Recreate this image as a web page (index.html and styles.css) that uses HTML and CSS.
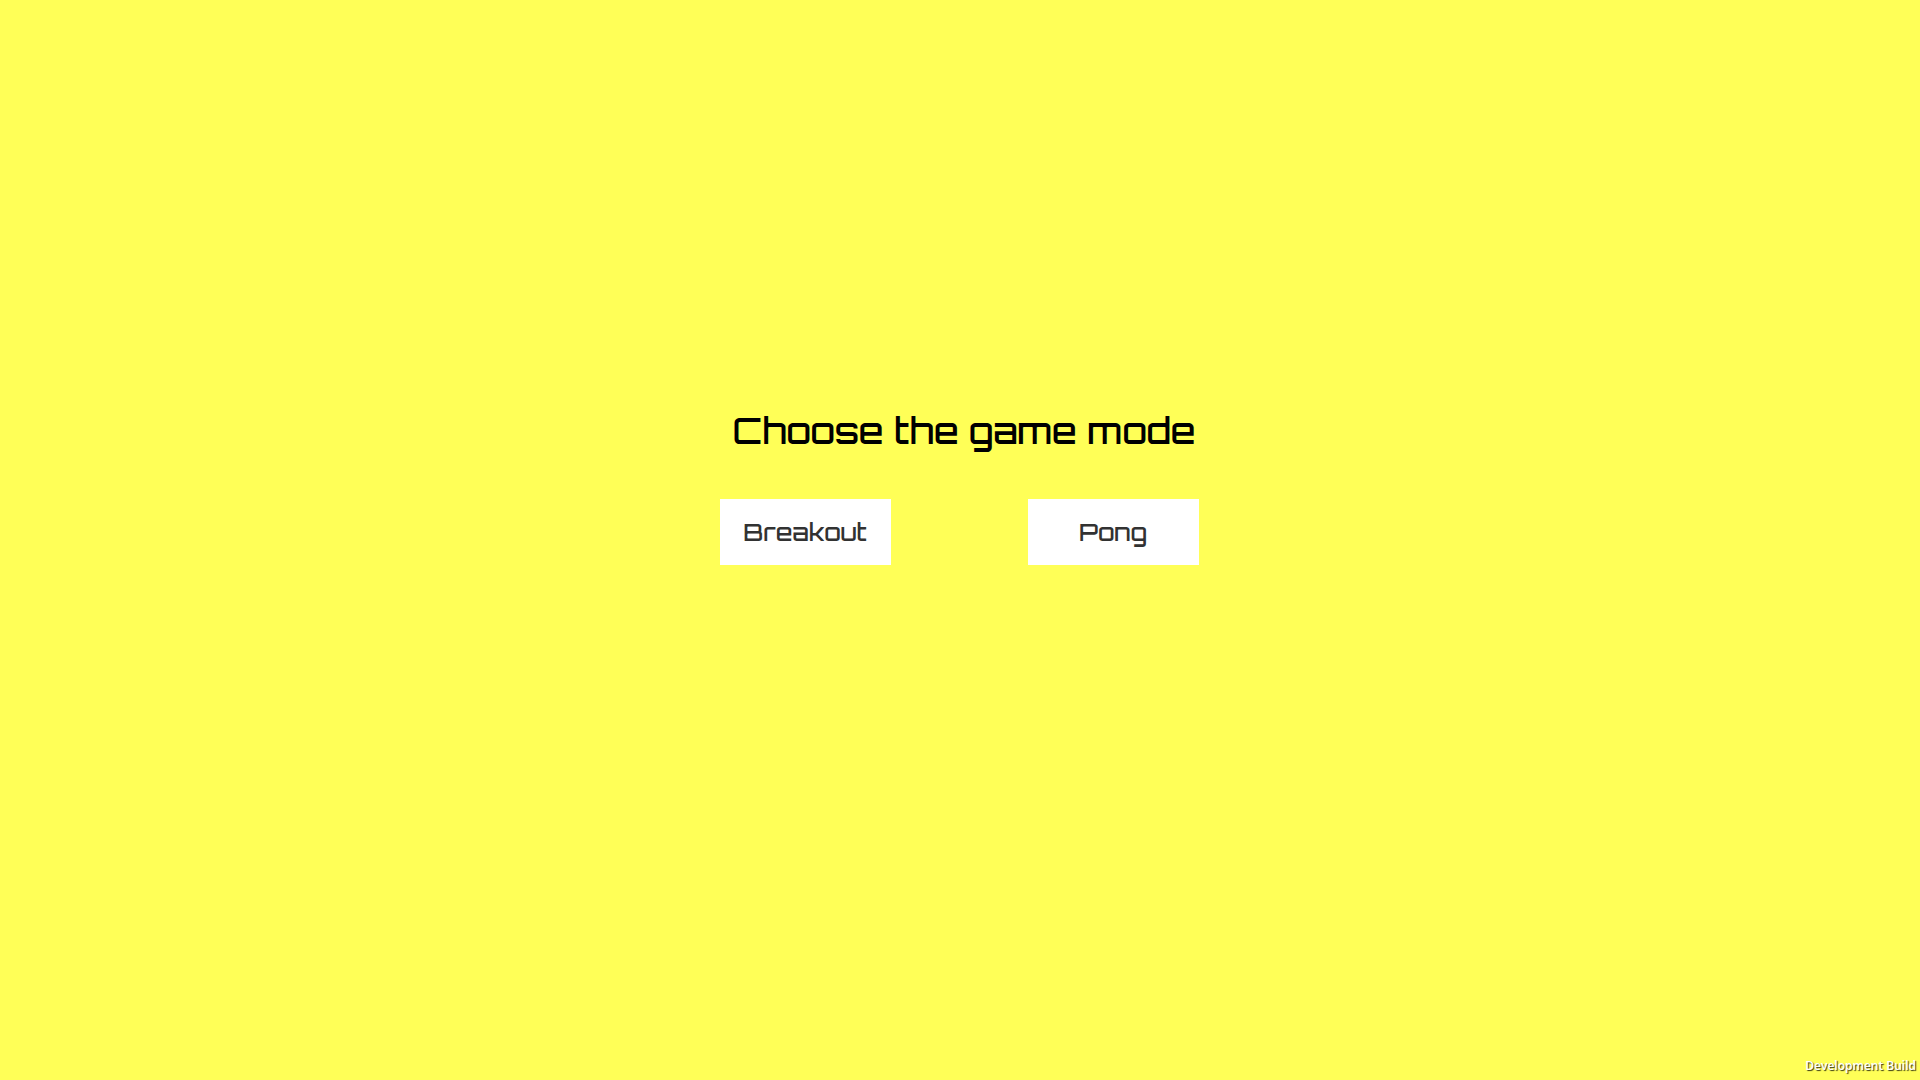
FILE: index.html
```html
<!DOCTYPE html>
<html lang="en">
<head>
<meta charset="utf-8">
<meta name="viewport" content="width=device-width, initial-scale=1">
<title>Choose the game mode</title>
<link rel="stylesheet" href="styles.css">
</head>
<body>
<main class="menu">
  <h1 class="menu-title">Choose the game mode</h1>
  <div class="menu-modes">
    <button class="mode-button" type="button">Breakout</button>
    <button class="mode-button" type="button">Pong</button>
  </div>
</main>
<footer class="build-label">Development Build</footer>
</body>
</html>
```

FILE: styles.css
```css
* {
  box-sizing: border-box;
}

body {
  margin: 0;
  min-height: 100vh;
  display: flex;
  flex-direction: column;
  background: #ffff57;
  font-family: Orbitron, "DejaVu Sans", sans-serif;
}

.menu {
  flex: 1;
  display: flex;
  flex-direction: column;
  align-items: center;
  justify-content: center;
  gap: 40px;
  padding: 0 2px 90px 0;
}

.menu-title {
  margin: 0;
  padding-left: 10px;
  color: #000;
  font-size: 36px;
  font-weight: 500;
  line-height: 56px;
}

.menu-modes {
  display: flex;
  gap: 137px;
}

.mode-button {
  width: 171px;
  height: 66px;
  padding: 0;
  border: 0;
  background: #fff;
  color: #323232;
  font-family: inherit;
  font-size: 24px;
  font-weight: 500;
  line-height: 32px;
}

.build-label {
  padding: 0 4px 5px;
  color: #fff;
  font-family: "Open Sans", sans-serif;
  font-size: 12px;
  font-weight: 600;
  line-height: 18px;
  text-align: right;
  text-shadow: 1px 1px 1px rgba(0, 0, 0, 0.8);
}
```
